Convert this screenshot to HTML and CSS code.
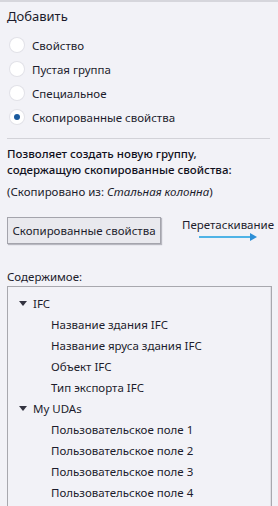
FILE: index.html
```html
<!DOCTYPE html>
<html lang="ru">
<head>
    <meta charset="UTF-8">
    <title>Добавить</title>
    <link rel="stylesheet" href="styles.css">
</head>
<body>

<div class="panel">
    <div class="heading">Добавить</div>

    <div class="radios">
        <label class="radio"><span class="dot"></span>Свойство</label>
        <label class="radio"><span class="dot"></span>Пустая группа</label>
        <label class="radio"><span class="dot"></span>Специальное</label>
        <label class="radio checked"><span class="dot"></span>Скопированные свойства</label>
    </div>

    <hr class="sep">

    <div class="desc">Позволяет создать новую группу, содержащую скопированные свойства:</div>
    <div class="source">(Скопировано из: <i>Стальная колонна</i>)</div>

    <div class="drag-row">
        <button class="copy-btn">Скопированные свойства</button>
        <div class="drag">
            <span>Перетаскивание</span>
            <svg width="58" height="8" viewBox="0 0 58 8">
                <line x1="0" y1="4" x2="52" y2="4" stroke="#4fb3e6" stroke-width="2"/>
                <polygon points="51,0 58,4 51,8" fill="#2e8fd6"/>
            </svg>
        </div>
    </div>

    <div class="label">Содержимое:</div>

    <div class="tree">
        <div class="node"><span class="tri"></span>IFC</div>
        <div class="leaf">Название здания IFC</div>
        <div class="leaf">Название яруса здания IFC</div>
        <div class="leaf">Объект IFC</div>
        <div class="leaf">Тип экспорта IFC</div>
        <div class="node"><span class="tri"></span>My UDAs</div>
        <div class="leaf">Пользовательское поле 1</div>
        <div class="leaf">Пользовательское поле 2</div>
        <div class="leaf">Пользовательское поле 3</div>
        <div class="leaf">Пользовательское поле 4</div>
    </div>
</div>

</body>
</html>
```

FILE: styles.css
```css
body {
    margin: 0;
    background-color: #f2f2f7;
    font-family: "Noto Sans", "Open Sans", sans-serif;
    font-size: 11.5px;
    color: #1c1c2c;
    overflow: hidden;
}

.panel {
    box-sizing: border-box;
    border-top: 2px solid #d6d6dc;
    padding: 4px 7px 0 7px;
    height: 506px;
    overflow: hidden;
    display: flex;
    flex-direction: column;
}

.heading {
    font-size: 13px;
    line-height: 20px;
    margin-bottom: 7px;
}

.radios {
    display: flex;
    flex-direction: column;
}

.radio {
    display: flex;
    align-items: center;
    height: 24px;
    padding-left: 3px;
    white-space: nowrap;
}

.dot {
    width: 14px;
    height: 14px;
    border-radius: 50%;
    background: #ffffff;
    box-shadow: 0 0 0 1px #e2e2e8;
    margin-right: 8px;
    display: flex;
    align-items: center;
    justify-content: center;
}

.radio.checked .dot::after {
    content: "";
    width: 6px;
    height: 6px;
    border-radius: 50%;
    background: #1a5a9e;
}

.sep {
    border: none;
    border-top: 1px solid #d2d2d8;
    margin: 9px 1px 7px 0;
    width: 263px;
}

.desc {
    font-weight: 500;
    line-height: 16px;
    width: 240px;
    color: #101020;
}

.source {
    margin-top: 6px;
    line-height: 16px;
}

.drag-row {
    display: flex;
    align-items: flex-start;
    margin-top: 17px;
}

.copy-btn {
    font-family: inherit;
    font-size: 11.5px;
    color: #1c1c2c;
    background: #e9e9ee;
    border: 1px solid #a4a4ac;
    box-shadow: 1px 1px 1px #b8b8c0;
    height: 27px;
    width: 154px;
    padding: 0;
    white-space: nowrap;
    flex-shrink: 0;
}

.drag {
    margin-left: 21px;
    display: flex;
    flex-direction: column;
    white-space: nowrap;
}

.drag svg {
    margin: 1px 0 0 17px;
}

.label {
    margin-top: 26px;
    line-height: 14px;
}

.tree {
    flex: 1;
    margin-top: 2px;
    width: 263px;
    border: 1px solid #a8a8ae;
    border-bottom: none;
    box-shadow: inset -1px 0 0 #e0e0e6;
    padding-top: 6px;
}

.node {
    display: flex;
    align-items: center;
    height: 21px;
    padding-left: 11px;
}

.tri {
    width: 0;
    height: 0;
    border-left: 4px solid transparent;
    border-right: 4px solid transparent;
    border-top: 5px solid #333340;
    margin-right: 6px;
}

.leaf {
    height: 21px;
    line-height: 21px;
    padding-left: 43px;
    white-space: nowrap;
}
```
